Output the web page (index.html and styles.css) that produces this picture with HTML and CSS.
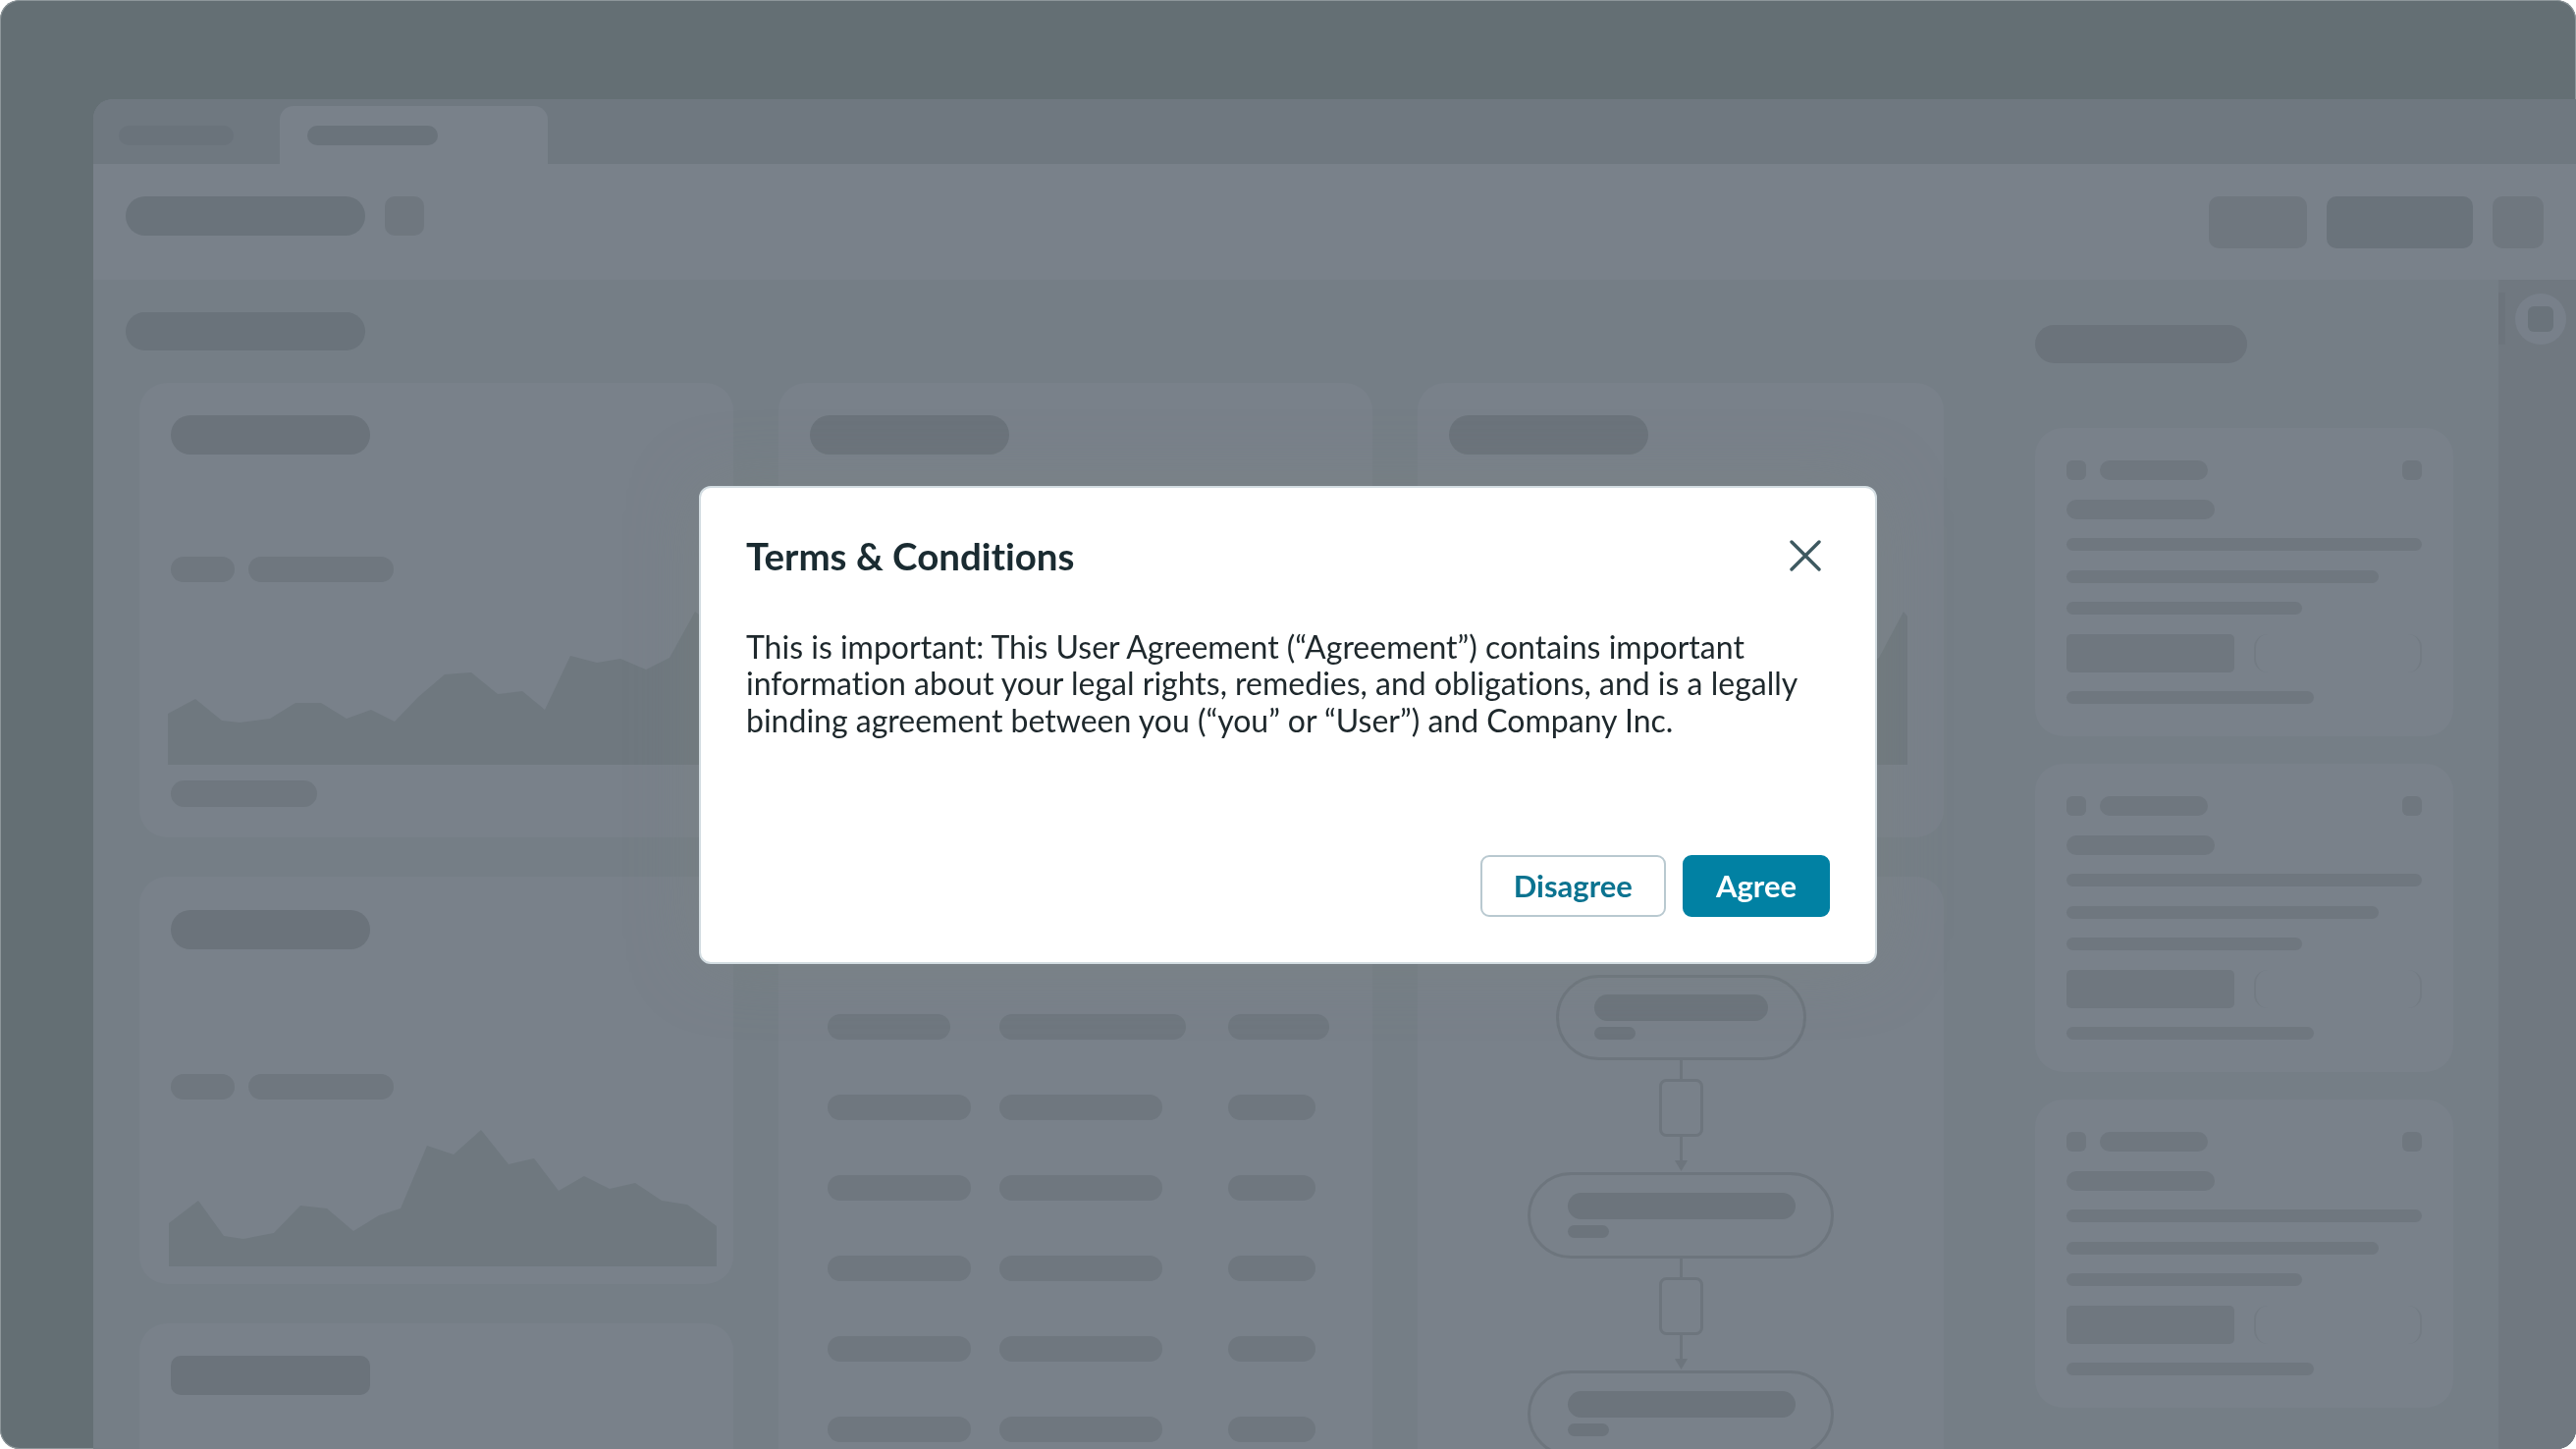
FILE: index.html
```html
<!DOCTYPE html>
<html lang="en">
<head>
<meta charset="utf-8">
<title>Terms &amp; Conditions</title>
<link rel="stylesheet" href="styles.css">
</head>
<body>
<div class="frame">
  <div class="window">
    <div class="tabbar">
      <div class="tab"><span class="sk tab-pill"></span></div>
      <div class="tab tab-active"><span class="sk tab-pill tab-pill-wide"></span></div>
    </div>
    <div class="toolbar">
      <div class="tb-left">
        <span class="sk tb-search"></span>
        <span class="sk tb-square"></span>
      </div>
      <div class="tb-right">
        <span class="tb-btn tb-btn-a"></span>
        <span class="tb-btn tb-btn-b"></span>
        <span class="tb-btn tb-btn-c"></span>
      </div>
    </div>
    <div class="workspace">
      <div class="main">
        <section class="dash">
          <span class="sk page-title"></span>
          <div class="columns">
            <div class="col col-wide">
              <div class="card card-chart">
                <span class="sk card-title"></span>
                <div class="legend"><span class="sk lg-a"></span><span class="sk lg-b"></span></div>
                <svg class="chart" viewBox="0 0 559 159" preserveAspectRatio="none"><polygon points="0,107 28,92 55,114 73,116 104,112 130,96 156,96 182,112 207,103 231,115 255,90 282,67 309,65 336,87 361,84 384,103 410,48 437,55 461,51 487,62 511,50 537,3 559,20 559,159 0,159"/></svg>
                <span class="sk foot-pill"></span>
              </div>
              <div class="card card-chart2">
                <span class="sk card-title"></span>
                <div class="legend legend2"><span class="sk lg-a"></span><span class="sk lg-b"></span></div>
                <svg class="chart chart2" viewBox="0 0 558 140" preserveAspectRatio="none"><polygon points="0,96 30,73 56,109 76,112 107,106 134,78 161,81 188,104 214,88 236,81 263,17 290,26 318,1 346,36 372,30 397,63 423,48 449,61 475,55 502,73 528,77 558,99 558,140 0,140"/></svg>
              </div>
              <div class="card card-tall">
                <span class="sk card-title card-title-sq"></span>
              </div>
            </div>
            <div class="col col-wide">
              <div class="card card-chart">
                <span class="sk card-title"></span>
                <div class="legend"><span class="sk lg-a"></span><span class="sk lg-b"></span></div>
                <svg class="chart" viewBox="0 0 559 159" preserveAspectRatio="none"><polygon points="0,110 40,100 80,112 120,92 160,98 200,80 240,96 280,70 320,84 360,60 400,76 440,52 480,66 520,40 559,50 559,159 0,159"/></svg>
                <span class="sk foot-pill"></span>
              </div>
              <div class="card card-table">
                <div class="trow trow-head"><span class="sk c1"></span><span class="sk c2"></span><span class="sk c3"></span></div>
                <div class="trow"><span class="sk c1"></span><span class="sk c2"></span><span class="sk c3"></span></div>
                <div class="trow"><span class="sk c1"></span><span class="sk c2"></span><span class="sk c3"></span></div>
                <div class="trow"><span class="sk c1"></span><span class="sk c2"></span><span class="sk c3"></span></div>
                <div class="trow"><span class="sk c1"></span><span class="sk c2"></span><span class="sk c3"></span></div>
                <div class="trow"><span class="sk c1"></span><span class="sk c2"></span><span class="sk c3"></span></div>
              </div>
            </div>
            <div class="col col-narrow">
              <div class="card card-chart">
                <span class="sk card-title"></span>
                <div class="legend"><span class="sk lg-a"></span><span class="sk lg-b"></span></div>
                <svg class="chart chart3" viewBox="0 0 470 159" preserveAspectRatio="none"><polygon points="0,100 30,90 60,108 90,96 120,104 150,84 180,92 210,76 240,88 270,70 300,80 330,62 360,74 390,58 415,66 441,50 466,3 470,8 470,159 0,159"/></svg>
                <span class="sk foot-pill"></span>
              </div>
              <div class="card card-flow">
                <div class="node node-a">
                  <span class="sk node-pill"></span>
                  <span class="sk node-sub"></span>
                </div>
                <svg class="link" viewBox="0 0 45 114"><line x1="22.5" y1="0" x2="22.5" y2="20"/><rect x="1.5" y="20.5" width="42" height="56" rx="6"/><line x1="22.5" y1="78" x2="22.5" y2="104"/><polygon class="arrow" points="16,102 29,102 22.5,113"/></svg>
                <div class="node node-b">
                  <span class="sk node-pill"></span>
                  <span class="sk node-sub"></span>
                </div>
                <svg class="link" viewBox="0 0 45 114"><line x1="22.5" y1="0" x2="22.5" y2="20"/><rect x="1.5" y="20.5" width="42" height="56" rx="6"/><line x1="22.5" y1="78" x2="22.5" y2="104"/><polygon class="arrow" points="16,102 29,102 22.5,113"/></svg>
                <div class="node node-b">
                  <span class="sk node-pill"></span>
                  <span class="sk node-sub"></span>
                </div>
              </div>
            </div>
          </div>
        </section>
        <aside class="panel">
          <span class="sk panel-title"></span>
          <div class="panel-cards">
            <div class="pcard">
              <div class="prow"><span class="sk dot"></span><span class="sk p-name"></span><span class="sk dot dot-end"></span></div>
              <span class="sk p-sub"></span>
              <span class="sk line l1"></span>
              <span class="sk line l2"></span>
              <span class="sk line l3"></span>
              <div class="pbtns"><span class="sk pbtn"></span><span class="pbtn-ghost"></span></div>
              <span class="sk line l4"></span>
            </div>
            <div class="pcard">
              <div class="prow"><span class="sk dot"></span><span class="sk p-name"></span><span class="sk dot dot-end"></span></div>
              <span class="sk p-sub"></span>
              <span class="sk line l1"></span>
              <span class="sk line l2"></span>
              <span class="sk line l3"></span>
              <div class="pbtns"><span class="sk pbtn"></span><span class="pbtn-ghost"></span></div>
              <span class="sk line l4"></span>
            </div>
            <div class="pcard">
              <div class="prow"><span class="sk dot"></span><span class="sk p-name"></span><span class="sk dot dot-end"></span></div>
              <span class="sk p-sub"></span>
              <span class="sk line l1"></span>
              <span class="sk line l2"></span>
              <span class="sk line l3"></span>
              <div class="pbtns"><span class="sk pbtn"></span><span class="pbtn-ghost"></span></div>
              <span class="sk line l4"></span>
            </div>
          </div>
        </aside>
      </div>
      <div class="sidebar">
        <span class="side-strip"></span>
        <span class="side-avatar"><span class="side-avatar-in"></span></span>
      </div>
    </div>
  </div>
</div>

<div class="overlay">
  <div class="modal" role="dialog" aria-labelledby="modal-title">
    <div class="modal-head">
      <h2 id="modal-title" class="modal-title">Terms &amp; Conditions</h2>
      <button class="close" aria-label="Close">
        <svg viewBox="0 0 32 32" width="32" height="32"><path d="M2 2 L30 30 M30 2 L2 30"/></svg>
      </button>
    </div>
    <p class="modal-body">This is important: This User Agreement (“Agreement”) contains important information about your legal rights, remedies, and obligations, and is a legally binding agreement between you (“you” or “User”) and Company Inc.</p>
    <div class="modal-foot">
      <button class="btn btn-secondary">Disagree</button>
      <button class="btn btn-primary">Agree</button>
    </div>
  </div>
</div>
</body>
</html>
```

FILE: styles.css
```css
* { box-sizing: border-box; }

html, body {
  margin: 0;
  padding: 0;
  background: #ffffff;
  font-family: "Lato", "Open Sans", "Liberation Sans", sans-serif;
  font-variant-ligatures: none;
  font-feature-settings: "liga" 0, "clig" 0;
}

.frame {
  width: 2624px;
  height: 1476px;
  background: #646f74;
  border-radius: 20px;
  overflow: hidden;
  box-shadow: inset 0 0 0 1px #8e979b;
}

.window {
  margin: 101px 0 0 95px;
  height: 1375px;
  border-top-left-radius: 20px;
  overflow: hidden;
  background: #757e86;
  display: flex;
  flex-direction: column;
}

.sk {
  display: block;
  background: #6f777f;
  border-radius: 999px;
}

/* tab bar */
.tabbar {
  height: 66px;
  flex: none;
  background: #6f7880;
  display: flex;
  align-items: flex-end;
  padding-left: 26px;
}
.tab {
  height: 59px;
  padding: 20px 0 0 0;
  width: 164px;
}
.tab-active {
  width: 273px;
  background: #79818a;
  border-radius: 14px 14px 0 0;
  padding-left: 28px;
}
.tab-pill {
  width: 117px;
  height: 20px;
  background: #6a737b;
}
.tab-pill-wide { width: 133px; }

/* toolbar */
.toolbar {
  height: 118px;
  flex: none;
  background: #79818a;
  display: flex;
  justify-content: space-between;
  align-items: flex-start;
  padding: 33px 33px 0 33px;
}
.tb-left { display: flex; gap: 20px; }
.tb-search { width: 244px; height: 40px; background: #6a737b; }
.tb-square { width: 40px; height: 40px; border-radius: 10px; background: #6f777f; }
.tb-right { display: flex; gap: 20px; }
.tb-btn { display: block; height: 53px; border-radius: 10px; background: #6f777f; }
.tb-btn-a { width: 100px; }
.tb-btn-b { width: 149px; background: #6a737b; }
.tb-btn-c { width: 52px; }

/* workspace */
.workspace {
  flex: 1;
  display: flex;
  min-height: 0;
}
.main {
  flex: 1;
  display: flex;
  background: #757e86;
  overflow: hidden;
}
.dash {
  padding: 33px 0 0 33px;
  flex: none;
}
.page-title {
  width: 244px;
  height: 39px;
  background: #6a737b;
}
.columns {
  display: flex;
  gap: 46px;
  margin: 33px 0 0 14px;
}
.col {
  display: flex;
  flex-direction: column;
  gap: 40px;
}
.col-wide { width: 605px; }
.col-narrow { width: 536px; }

.card {
  background: #79818a;
  border-radius: 28px;
  padding: 33px 0 0 32px;
  display: flex;
  flex-direction: column;
  align-items: flex-start;
}
.card-title {
  width: 203px;
  height: 40px;
  background: #6b737b;
}
.card-title-sq { border-radius: 10px; }

.card-chart { height: 463px; }
.legend {
  display: flex;
  gap: 14px;
  margin-top: 104px;
}
.lg-a { width: 65px; height: 26px; }
.lg-b { width: 148px; height: 26px; }
.chart {
  display: block;
  width: 559px;
  height: 159px;
  margin: 27px 0 0 -3px;
  fill: #6f787f;
}
.chart3 { width: 470px; }
.foot-pill {
  width: 149px;
  height: 27px;
  margin-top: 16px;
}

.card-chart2 { height: 415px; padding-top: 34px; }
.legend2 { margin-top: 127px; }
.chart2 { width: 558px; height: 140px; margin: 30px 0 0 -2px; }

.card-tall { height: 420px; }

/* table */
.card-table {
  height: 620px;
  padding: 140px 0 0 50px;
  gap: 56px;
}
.trow {
  display: flex;
  align-items: center;
}
.trow .sk { height: 26px; }
.c1 { width: 146px; margin-right: 29px; }
.c2 { width: 166px; margin-right: 67px; }
.c3 { width: 89px; }
.trow-head .c1 { width: 125px; margin-right: 50px; }
.trow-head .c2 { width: 190px; margin-right: 43px; }
.trow-head .c3 { width: 103px; }

/* flow */
.card-flow {
  height: 620px;
  padding: 100px 0 0 0;
  align-items: center;
}
.node {
  border: 3px solid #6d757d;
  border-radius: 44px;
  display: flex;
  flex-direction: column;
  gap: 6px;
  padding: 17px 0 0 36px;
  flex: none;
}
.node-a { width: 255px; height: 87px; }
.node-b { width: 312px; height: 88px; padding-top: 18px; padding-left: 38px; }
.node-pill { width: 177px; height: 27px; background: #6c747c; }
.node-b .node-pill { width: 232px; }
.node-sub { width: 42px; height: 13px; background: #6c747c; }
.link {
  display: block;
  width: 45px;
  height: 114px;
  flex: none;
  margin-left: 1px;
}
.link line, .link rect {
  stroke: #6d757d;
  stroke-width: 3;
  fill: none;
}
.link .arrow { fill: #6d757d; }

/* right panel */
.panel {
  width: 426px;
  margin-left: 93px;
  padding-top: 46px;
  flex: none;
}
.panel-title {
  width: 216px;
  height: 39px;
  background: #6b737b;
}
.panel-cards {
  margin-top: 66px;
  display: flex;
  flex-direction: column;
  gap: 28px;
}
.pcard {
  height: 314px;
  background: #79818a;
  border-radius: 28px;
  padding: 33px 32px;
  display: flex;
  flex-direction: column;
  gap: 19.5px;
  align-items: flex-start;
}
.prow {
  display: flex;
  width: 100%;
  align-items: center;
}
.dot { width: 20px; height: 20px; border-radius: 6px; }
.dot-end { margin-left: auto; }
.p-name { width: 110px; height: 20px; margin-left: 14px; }
.p-sub { width: 151px; height: 20px; }
.line { height: 13px; }
.l1 { width: 362px; }
.l2 { width: 318px; }
.l3 { width: 240px; }
.l4 { width: 252px; }
.pbtns { display: flex; gap: 20px; }
.pbtn { width: 171px; height: 39px; border-radius: 5px; }
.pbtn-ghost {
  display: block;
  width: 171px;
  height: 39px;
  border-radius: 14px;
  border-left: 2px solid #737b83;
  border-right: 2px solid #737b83;
}

/* sidebar */
.sidebar {
  width: 79px;
  flex: none;
  background: #707880;
  display: flex;
  align-items: flex-start;
  padding-top: 13px;
}
.side-strip {
  display: block;
  width: 7px;
  height: 53px;
  background: #6c747c;
}
.side-avatar {
  width: 52px;
  height: 52px;
  margin: 1px 0 0 10px;
  border-radius: 50%;
  background: #78808a;
  display: flex;
  align-items: center;
  justify-content: center;
}
.side-avatar-in {
  display: block;
  width: 26px;
  height: 26px;
  border-radius: 6px;
  background: #6a737b;
}

/* modal */
.overlay {
  position: fixed;
  inset: 0;
  display: flex;
  align-items: center;
  justify-content: center;
}
.modal {
  width: 1200px;
  height: 487px;
  background: #ffffff;
  border: 2px solid #d3dde2;
  border-radius: 12px;
  padding: 45px 46px 46px 46px;
  display: flex;
  flex-direction: column;
  box-shadow: 0 0 70px rgba(125, 133, 128, 0.45);
}
.modal-head {
  display: flex;
  justify-content: space-between;
  align-items: center;
}
.modal-title {
  margin: 0;
  font-size: 38.5px;
  line-height: 46px;
  font-weight: 700;
  color: #1a2b31;
}
.close {
  width: 48px;
  height: 48px;
  padding: 0;
  margin-right: 1px;
  border: 0;
  background: transparent;
  display: flex;
  align-items: center;
  justify-content: center;
}
.close svg path {
  stroke: #3e5960;
  stroke-width: 3.4;
  stroke-linecap: round;
  fill: none;
}
.modal-body {
  margin: 50px 0 0 0;
  font-size: 32px;
  line-height: 37.5px;
  color: #1e282c;
}
.modal-foot {
  margin-top: auto;
  display: flex;
  justify-content: flex-end;
  gap: 17px;
}
.btn {
  height: 63px;
  padding: 0 32px;
  border-radius: 9px;
  font-family: "Lato", "Liberation Sans", sans-serif;
  font-size: 31px;
  font-weight: 700;
  font-variant-ligatures: none;
}
.btn-secondary {
  background: #ffffff;
  border: 2px solid #b9c9d0;
  color: #0b7390;
}
.btn-primary {
  background: #0181a3;
  border: 2px solid #0181a3;
  color: #ffffff;
}
```
